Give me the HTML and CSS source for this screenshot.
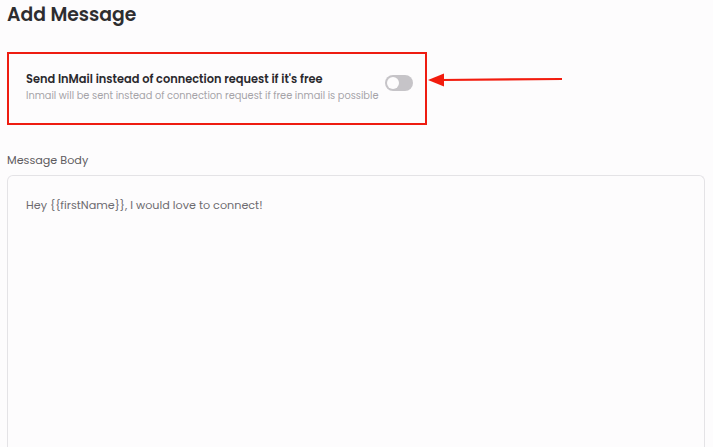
FILE: index.html
```html
<!DOCTYPE html>
<html>
<head>
<meta charset="utf-8">
<link rel="stylesheet" href="styles.css">
</head>
<body>
<div class="page">
  <h1 class="title">Add Message</h1>
  <div class="row">
    <div class="inmail-box">
      <div class="inmail-text">
        <div class="inmail-head">Send InMail instead of connection request if it's free</div>
        <div class="inmail-sub">Inmail will be sent instead of connection request if free inmail is possible</div>
      </div>
      <div class="toggle"><span class="knob"></span></div>
    </div>
    <svg class="arrow" width="140" height="16" viewBox="0 0 140 16">
      <line x1="12" y1="8" x2="134" y2="7" stroke="#f21c0e" stroke-width="2.2"/>
      <polygon points="0,8 16,1.5 16,14.5" fill="#f21c0e"/>
    </svg>
  </div>
  <div class="label">Message Body</div>
  <div class="body-box">Hey {{firstName}}, I would love to connect!</div>
</div>
</body>
</html>
```
FILE: styles.css
```css
html, body {
  margin: 0;
  padding: 0;
  background: #fdfcfd;
  overflow: hidden;
}
body {
  font-family: "Poppins", "Open Sans", "Noto Sans", sans-serif;
}
.page {
  height: 447px;
  box-sizing: border-box;
  padding: 3px 8px 0 7px;
  display: flex;
  flex-direction: column;
}
.title {
  margin: 0;
  font-size: 18.8px;
  font-weight: 600;
  color: #2e2d30;
  line-height: 24px;
}
.row {
  display: flex;
  align-items: center;
  margin-top: 25px;
}
.inmail-box {
  width: 387px;
  height: 69px;
  border: 2px solid #ee1c11;
  display: flex;
  align-items: center;
  justify-content: space-between;
  padding: 0 12px 0 17px;
  background: #fdfcfd;
}
.inmail-text {
  display: flex;
  flex-direction: column;
  gap: 2px;
  margin-top: -4px;
}
.inmail-head {
  font-size: 11.4px;
  font-weight: 600;
  color: #2a292d;
  line-height: 16px;
}
.inmail-sub {
  font-size: 9.8px;
  color: #a5a3a8;
  line-height: 13px;
}
.toggle {
  width: 28px;
  height: 16px;
  border-radius: 8px;
  background: #c6c4c8;
  position: relative;
  margin-top: -12px;
}
.knob {
  position: absolute;
  left: 2px;
  top: 2px;
  width: 12px;
  height: 12px;
  border-radius: 50%;
  background: #fdfcfd;
}
.arrow {
  margin-left: 1px;
  margin-top: -18px;
}
.label {
  margin-top: 27px;
  font-size: 11.2px;
  color: #5d5b60;
  line-height: 16px;
}
.body-box {
  margin-top: 7px;
  flex: 1;
  border: 1px solid #e4e3e6;
  border-bottom: none;
  border-radius: 6px 6px 0 0;
  padding: 21px 18px;
  font-size: 11.2px;
  color: #6d6b70;
  line-height: 16px;
  background: #fdfcfd;
}
```
